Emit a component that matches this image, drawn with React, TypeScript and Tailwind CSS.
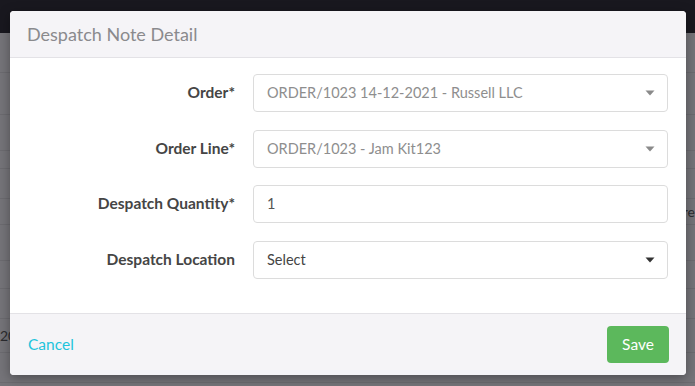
import React from 'react';

type Field = {
  label: string;
  value: string;
  kind: 'select' | 'input';
  muted?: boolean;
};

const fields: Field[] = [
  { label: 'Order*', value: 'ORDER/1023 14-12-2021 - Russell LLC', kind: 'select', muted: true },
  { label: 'Order Line*', value: 'ORDER/1023 - Jam Kit123', kind: 'select', muted: true },
  { label: 'Despatch Quantity*', value: '1', kind: 'input' },
  { label: 'Despatch Location', value: 'Select', kind: 'select' },
];

// rows of the page table hidden behind the overlay
const bgRows = [40, 42, 36, 18, 30, 26, 36, 28, 30, 34, 30];

function Caret({ dark }: { dark?: boolean }) {
  return (
    <svg width="10" height="6" viewBox="0 0 10 6" className="shrink-0">
      <polygon points="0.5,0.5 9.5,0.5 5,5.5" fill={dark ? '#333333' : '#8a8a8a'} />
    </svg>
  );
}

function FormRow({ field }: { field: Field }) {
  return (
    <div className="grid grid-cols-[225px_1fr] items-center gap-[18px]">
      <label className="text-right text-[15.5px] font-bold text-[#454545]">{field.label}</label>
      <div className="flex h-[38px] items-center justify-between rounded-[4px] border border-[#dcdcdc] bg-white pl-[13px] pr-[12px]">
        <span
          className={
            field.muted
              ? 'text-[14.5px] text-[#8e8e8e]'
              : field.kind === 'input'
                ? 'text-[14.5px] text-[#555555]'
                : 'text-[14.5px] text-[#444444]'
          }
        >
          {field.value}
        </span>
        {field.kind === 'select' && <Caret dark={!field.muted} />}
      </div>
    </div>
  );
}

export default function App() {
  return (
    <div className="relative h-[386px] w-[695px] overflow-hidden bg-[#757479] font-['Lato','Liberation_Sans',sans-serif]">
      {/* page behind the overlay */}
      <div className="h-[33px] bg-[#19181f]" />
      <div className="flex flex-col">
        {bgRows.map((h, i) => (
          <div
            key={i}
            className="flex items-center justify-between border-b border-[#6c6b70]"
            style={{ height: h }}
          >
            <span className="text-[14px] text-[#2c2c30]">{i === 9 ? '20' : ''}</span>
            <span className="text-[14px] text-[#2c2c30]">{i === 5 ? 're' : ''}</span>
          </div>
        ))}
      </div>

      {/* modal */}
      <div className="absolute left-[10px] top-[11px] flex h-[364px] w-[676px] flex-col overflow-hidden rounded-[4px] bg-white shadow-[0_3px_12px_rgba(0,0,0,0.35)]">
        <div className="flex h-[47px] shrink-0 items-center border-b border-[#e3e2e6] bg-[#f5f4f7] pl-[17px]">
          <h2 className="text-[18px] text-[#8a8a8d]">Despatch Note Detail</h2>
        </div>
        <div className="flex flex-1 flex-col gap-[17.5px] pr-[18px] pt-[16px]">
          {fields.map((f) => (
            <FormRow key={f.label} field={f} />
          ))}
        </div>
        <div className="flex h-[62px] shrink-0 items-center justify-between border-t border-[#e3e2e6] bg-[#f5f4f7] pl-[18px] pr-[17px]">
          <button className="text-[15.5px] text-[#1fc4dc]">Cancel</button>
          <button className="h-[37px] w-[62px] rounded-[4px] bg-[#5cb85c] text-[15.5px] text-white">Save</button>
        </div>
      </div>
    </div>
  );
}
